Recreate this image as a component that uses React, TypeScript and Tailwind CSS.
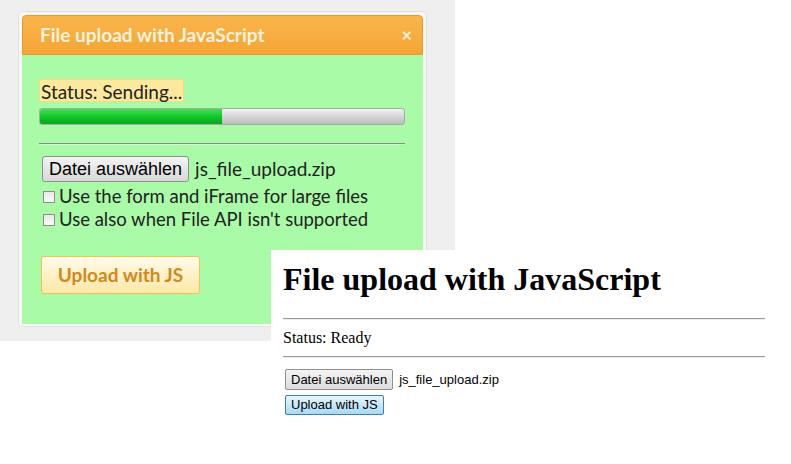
import React from "react";

export default function App() {
  return (
    <div className="relative w-[791px] h-[464px] bg-white overflow-hidden">
      <div className="w-[455px] h-[341px] bg-[#efefef] pt-[11px] pl-[18px]">
        <div className="w-[409px] h-[316px] bg-[#f7f7f7] border border-[#e2e2e2] rounded-[4px] p-[3px]">
          <div className="h-[40px] rounded-t-[4px] border border-[#e79a2c] bg-gradient-to-b from-[#f9b54c] to-[#f5a534] flex items-center justify-between pl-[17px] pr-[10px]" style={{ fontFamily: "Lato, 'Open Sans', sans-serif" }}>
            <span className="text-[19px] font-bold text-[#fdf3dc]">File upload with JavaScript</span>
            <span className="text-[18px] font-bold text-[#fdf3dc] leading-none">×</span>
          </div>
          <div className="h-[269px] bg-[#a9fba7] pl-[17px] pr-[16px] pt-[24px]" style={{ fontFamily: "Lato, 'Open Sans', sans-serif" }}>
            <div className="inline-block bg-[#fde99d] border border-[#f3db86] px-[1px] h-[23px] leading-[23px] text-[19px] text-[#222]">Status: Sending...</div>
            <div className="mt-[3px] h-[17px] w-[366px] rounded-[3px] border border-[#a9a9a9] bg-gradient-to-b from-[#f2f2f2] via-[#d6d6d6] to-[#bcbcbc] overflow-hidden">
              <div className="h-full w-[182px] bg-gradient-to-b from-[#3ee250] via-[#10c62a] to-[#0aa51f]" />
            </div>
            <div className="mt-[18px] w-[366px] border-t border-[#8a8a8a] border-b border-b-[#d8f8d4]" />
            <div className="mt-[11px] flex items-center h-[26px] ml-[3px]">
              <span className="h-[26px] px-[6px] rounded-[3px] border border-[#8f8f8f] bg-gradient-to-b from-[#f4f4f4] to-[#d8d8d8] flex items-center text-[18px] text-black" style={{ fontFamily: "'Liberation Sans', Arial, sans-serif" }}>Datei auswählen</span>
              <span className="ml-[6px] text-[19px] text-[#222]">js_file_upload.zip</span>
            </div>
            <div className="mt-[3px] flex items-center h-[23px] ml-[4px]">
              <span className="w-[12px] h-[12px] border border-[#8e8e8e] bg-gradient-to-b from-[#e8e8e8] to-[#fafafa]" />
              <span className="ml-[4px] text-[18.5px] text-[#222]">Use the form and iFrame for large files</span>
            </div>
            <div className="flex items-center h-[23px] ml-[4px]">
              <span className="w-[12px] h-[12px] border border-[#8e8e8e] bg-gradient-to-b from-[#e8e8e8] to-[#fafafa]" />
              <span className="ml-[4px] text-[18.5px] text-[#222]">Use also when File API isn't supported</span>
            </div>
            <div className="mt-[25px] ml-[2px] w-[159px] h-[38px] rounded-[3px] border border-[#f4c34e] bg-gradient-to-b from-[#fffbea] to-[#fde8a6] flex items-center justify-center text-[19px] font-bold text-[#d3881c]">Upload with JS</div>
          </div>
        </div>
      </div>

      <div className="absolute left-[271px] top-[250px] right-0 bottom-0 bg-white pl-[12px] pr-[26px]" style={{ fontFamily: "'Liberation Serif', 'Times New Roman', serif" }}>
        <h1 className="text-[32px] font-bold text-black leading-[37px] mt-[11px]">File upload with JavaScript</h1>
        <div className="mt-[20px] border-t border-[#9a9a9a] border-b border-b-[#eeeeee]" />
        <div className="text-[16px] leading-[18px] mt-[9px] text-black">Status: Ready</div>
        <div className="mt-[9px] border-t border-[#9a9a9a] border-b border-b-[#eeeeee]" />
        <div className="mt-[11px] flex items-center h-[21px] ml-[2px]" style={{ fontFamily: "'Liberation Sans', Arial, sans-serif" }}>
          <span className="h-[21px] px-[5px] rounded-[2px] border border-[#8f8f8f] bg-gradient-to-b from-[#f4f4f4] to-[#dcdcdc] flex items-center text-[13px] text-black">Datei auswählen</span>
          <span className="ml-[6px] text-[13px] text-black">js_file_upload.zip</span>
        </div>
        <div className="mt-[5px] ml-[2px] flex" style={{ fontFamily: "'Liberation Sans', Arial, sans-serif" }}>
          <span className="flex h-[20px] px-[5px] rounded-[2px] border border-[#3c7fb1] bg-gradient-to-b from-[#eaf6fd] to-[#a7d9f5] items-center text-[13px] text-black">Upload with JS</span>
        </div>
      </div>
    </div>
  );
}
